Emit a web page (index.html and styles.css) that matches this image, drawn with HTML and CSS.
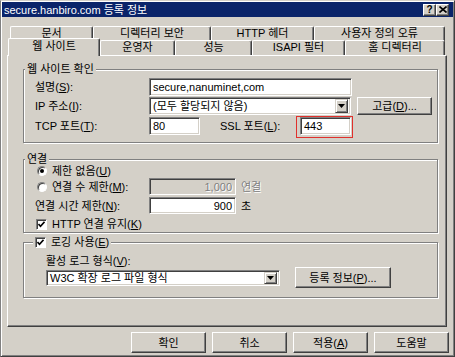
FILE: index.html
```html
<!DOCTYPE html>
<html lang="ko">
<head>
    <meta charset="UTF-8">
    <title>secure.hanbiro.com 등록 정보</title>
    <link rel="stylesheet" href="styles.css">
</head>
<body>
    <div class="window">
        <div class="titlebar">
            <span class="title">secure.hanbiro.com 등록 정보</span>
            <div class="caption-btns">
                <span class="cap-btn">?</span>
                <span class="cap-btn">
                    <svg width="8" height="7" viewBox="0 0 8 7"><path d="M0.5 0.5 L7.5 6.5 M7.5 0.5 L0.5 6.5" stroke="#000" stroke-width="1.6"/></svg>
                </span>
            </div>
        </div>

        <div class="dialog">
            <div class="tab-row back">
                <div class="tab w-doc">문서</div>
                <div class="tab w-sec">디렉터리 보안</div>
                <div class="tab w-hdr">HTTP 헤더</div>
                <div class="tab w-err">사용자 정의 오류</div>
            </div>
            <div class="tab-row front">
                <div class="tab active w-web">웹 사이트</div>
                <div class="tab w-op">운영자</div>
                <div class="tab w-perf">성능</div>
                <div class="tab w-isapi">ISAPI 필터</div>
                <div class="tab w-home">홈 디렉터리</div>
            </div>

            <div class="panel">
                <div class="group g1">
                    <div class="legend">웹 사이트 확인</div>
                    <div class="row r1">
                        <span class="label">설명(<u>S</u>):</span>
                        <div class="field w-desc">secure,nanuminet,com</div>
                    </div>
                    <div class="row r2">
                        <span class="label">IP 주소(<u>I</u>):</span>
                        <div class="field select w-ip">
                            <span>(모두 할당되지 않음)</span>
                            <span class="arrow"><svg width="7" height="4" viewBox="0 0 7 4"><path d="M0 0 H7 L3.5 4 Z" fill="#000"/></svg></span>
                        </div>
                        <div class="btn w-adv">고급(<u>D</u>)...</div>
                    </div>
                    <div class="row r3">
                        <span class="label">TCP 포트(<u>T</u>):</span>
                        <div class="field w-port">80</div>
                        <span class="ssl-label">SSL 포트(<u>L</u>):</span>
                        <span class="mark">
                            <span class="field w-port">443</span>
                        </span>
                    </div>
                </div>

                <div class="group g2">
                    <div class="legend">연결</div>
                    <div class="row r1">
                        <span class="radio"><span class="dot"></span></span>
                        <span>제한 없음(<u>U</u>)</span>
                    </div>
                    <div class="row r2">
                        <span class="opt-label">
                            <span class="radio"></span>
                            <span>연결 수 제한(<u>M</u>):</span>
                        </span>
                        <div class="field num disabled">1,000</div>
                        <span class="unit dim">연결</span>
                    </div>
                    <div class="row r3">
                        <span class="label">연결 시간 제한(<u>N</u>):</span>
                        <div class="field num">900</div>
                        <span class="unit">초</span>
                    </div>
                    <div class="row r4">
                        <span class="check">
                            <svg width="7" height="7" viewBox="0 0 7 7"><path d="M0.5 3 L2.5 5.2 L6.5 0.8" stroke="#000" stroke-width="1.6" fill="none"/></svg>
                        </span>
                        <span>HTTP 연결 유지(<u>K</u>)</span>
                    </div>
                </div>

                <div class="group g3">
                    <div class="legend">
                        <span class="check">
                            <svg width="7" height="7" viewBox="0 0 7 7"><path d="M0.5 3 L2.5 5.2 L6.5 0.8" stroke="#000" stroke-width="1.6" fill="none"/></svg>
                        </span>
                        <span>로깅 사용(<u>E</u>)</span>
                    </div>
                    <div class="row label-row">활성 로그 형식(<u>V</u>):</div>
                    <div class="row r2">
                        <div class="field select w-log">
                            <span>W3C 확장 로그 파일 형식</span>
                            <span class="arrow"><svg width="7" height="4" viewBox="0 0 7 4"><path d="M0 0 H7 L3.5 4 Z" fill="#000"/></svg></span>
                        </div>
                        <div class="btn w-props">등록 정보(<u>P</u>)...</div>
                    </div>
                </div>
            </div>

            <div class="actions">
                <div class="btn">확인</div>
                <div class="btn">취소</div>
                <div class="btn">적용(<u>A</u>)</div>
                <div class="btn">도움말</div>
            </div>
        </div>
    </div>
</body>
</html>
```

FILE: styles.css
```css
body {
    margin: 0;
    font-family: "Liberation Sans", "Noto Sans CJK KR", sans-serif;
    font-size: 11px;
    line-height: 14px;
    color: #000;
    background-color: #d4d0c8;
}

u {
    text-decoration: underline;
    text-underline-offset: 1px;
}

.window {
    width: 455px;
    height: 357px;
    box-sizing: border-box;
    padding: 1px;
    border: 1px solid #404040;
    border-top-color: #d4d0c8;
    border-left-color: #808080;
    box-shadow: inset 1px 1px #fff, inset -1px -1px #808080;
    background-color: #d4d0c8;
}

/* title bar */
.titlebar {
    height: 15px;
    display: flex;
    align-items: center;
    justify-content: space-between;
    padding: 0 4px 0 2px;
    background-color: #0a246a;
    color: #fff;
}

.caption-btns {
    display: flex;
}

.cap-btn {
    width: 13px;
    height: 12px;
    box-sizing: border-box;
    display: flex;
    align-items: center;
    justify-content: center;
    background-color: #d4d0c8;
    border: 1px solid;
    border-color: #fff #404040 #404040 #fff;
    box-shadow: inset -1px -1px #808080;
    color: #000;
    font-size: 10px;
    font-weight: bold;
    line-height: 10px;
}

/* tabs */
.dialog {
    padding: 9px 6px 0 5px;
}

.tab-row {
    display: flex;
    align-items: flex-start;
}

.tab-row.back {
    height: 14px;
    margin-left: 3px;
}

.tab-row.front {
    height: 15px;
    margin-left: 1px;
}

.tab {
    box-sizing: border-box;
    height: 15px;
    border-top: 1px solid #fff;
    border-left: 1px solid #fff;
    border-right: 1px solid #404040;
    border-radius: 2px 2px 0 0;
    box-shadow: inset -1px 0 #808080;
    background-color: #d4d0c8;
    text-align: center;
    line-height: 13px;
}

.tab.active {
    position: relative;
    height: 18px;
    margin-top: -2px;
    line-height: 15px;
}

.w-doc { width: 83px; }
.w-sec { width: 118px; }
.w-hdr { width: 103px; }
.w-err { width: 131px; }
.w-web { width: 92px; }
.w-op { width: 75px; }
.w-perf { width: 77px; }
.w-isapi { width: 93px; }
.w-home { width: 100px; }

/* tab page */
.panel {
    height: 272px;
    box-sizing: border-box;
    padding: 13px 0 0 15px;
    border: 1px solid;
    border-color: #fff #404040 #404040 #fff;
    box-shadow: inset -1px -1px #808080;
}

.group {
    width: 415px;
    box-sizing: border-box;
    padding-left: 11px;
    border: 1px solid #808080;
    box-shadow: inset 1px 1px #fff, 1px 1px #fff;
}

.g1 { height: 74px; }
.g2 { height: 74px; margin-top: 16px; }
.g3 { height: 56px; margin-top: 9px; padding-left: 22px; }

.legend {
    display: flex;
    align-items: center;
    width: fit-content;
    height: 14px;
    margin: -8px 0 -6px -10px;
    padding: 0 2px;
    background-color: #d4d0c8;
}

.g3 .legend {
    margin-left: -13px;
}

.g3 .legend .check {
    margin: 0 5px 0 0;
}

.row {
    display: flex;
    align-items: center;
    height: 18px;
}

.label {
    width: 114px;
    flex-shrink: 0;
}

.g1 .r1 { margin-top: 8px; }
.g1 .r2 { margin-top: 1px; }
.g1 .r3 { margin-top: 2px; }

.g2 .r1 { margin-top: 4px; height: 14px; }
.g2 .r2 { height: 17px; }
.g2 .r3 { margin-top: 2px; height: 17px; }
.g2 .r4 { margin-top: 3px; height: 14px; }

.g3 .label-row { margin-top: 11px; height: 14px; }
.g3 .r2 { margin-top: -1px; height: 21px; }

/* sunken fields */
.field {
    box-sizing: border-box;
    height: 18px;
    display: flex;
    align-items: center;
    padding: 0 3px;
    background-color: #fff;
    border: 1px solid;
    border-color: #808080 #fff #fff #808080;
    box-shadow: inset 1px 1px #404040, inset -1px -1px #d4d0c8;
    white-space: nowrap;
}

.field.select {
    padding-right: 2px;
}

.arrow {
    width: 13px;
    height: 14px;
    box-sizing: border-box;
    margin-left: auto;
    display: flex;
    align-items: center;
    justify-content: center;
    background-color: #d4d0c8;
    border: 1px solid;
    border-color: #d4d0c8 #404040 #404040 #d4d0c8;
    box-shadow: inset 1px 1px #fff, inset -1px -1px #808080;
}

.w-desc { width: 203px; }
.w-ip { width: 202px; }
.w-port { width: 51px; }
.w-log { width: 234px; height: 16px; }
.w-log .arrow { height: 12px; }

.ssl-label {
    width: 76px;
    margin-left: 20px;
}

.mark {
    display: flex;
    padding: 0 1px 2px 3px;
    margin: -1px 0 -3px;
    border: 1px solid #e0302c;
}

.field.num {
    width: 87px;
    height: 17px;
    justify-content: flex-end;
    padding-right: 3px;
}

.field.disabled {
    background-color: #d4d0c8;
    color: #808080;
    text-shadow: 1px 1px #fff;
}

.unit {
    margin-left: 5px;
}

.dim {
    color: #808080;
    text-shadow: 1px 1px #fff;
}

.opt-label {
    width: 114px;
    display: flex;
    align-items: center;
}

/* radio and check */
.radio {
    width: 10px;
    height: 10px;
    box-sizing: border-box;
    margin: 0 5px 0 2px;
    display: flex;
    align-items: center;
    justify-content: center;
    border-radius: 50%;
    background-color: #fff;
    border: 1px solid;
    border-color: #808080 #fff #fff #808080;
    box-shadow: inset 1px 1px #404040;
}

.dot {
    width: 4px;
    height: 4px;
    border-radius: 50%;
    background-color: #000;
}

.check {
    width: 11px;
    height: 11px;
    box-sizing: border-box;
    margin: 0 5px 0 1px;
    display: flex;
    align-items: center;
    justify-content: center;
    background-color: #fff;
    border: 1px solid;
    border-color: #808080 #fff #fff #808080;
    box-shadow: inset 1px 1px #404040;
}

/* buttons */
.btn {
    box-sizing: border-box;
    display: flex;
    align-items: center;
    justify-content: center;
    background-color: #d4d0c8;
    border: 1px solid;
    border-color: #fff #404040 #404040 #fff;
    box-shadow: inset -1px -1px #808080;
    white-space: nowrap;
}

.w-adv {
    width: 75px;
    height: 18px;
    margin-left: 6px;
}

.w-props {
    width: 96px;
    height: 21px;
    margin-left: 15px;
}

.actions {
    display: flex;
    justify-content: flex-end;
    gap: 6px;
    margin: 5px -2px 0 0;
}

.actions .btn {
    width: 75px;
    height: 21px;
}
```
